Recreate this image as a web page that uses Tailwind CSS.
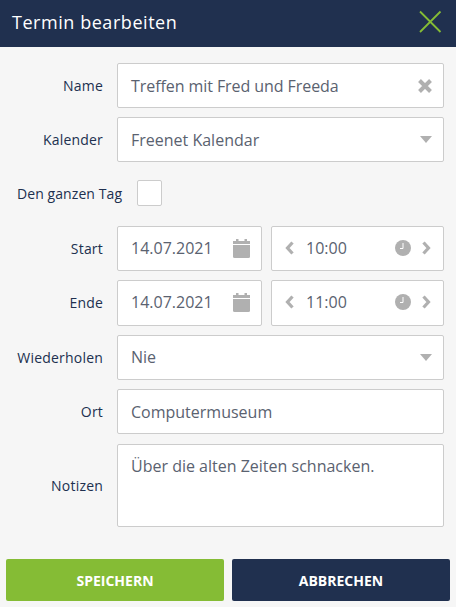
<!DOCTYPE html>
<html lang="de">
<head>
<meta charset="utf-8">
<script src="https://cdn.jsdelivr.net/npm/@tailwindcss/browser@4"></script>
</head>
<body class="m-0 bg-[#f6f6f6] font-['Open_Sans',sans-serif]">
<div class="w-[456px] h-[607px] flex flex-col overflow-hidden">
  <header class="h-[47px] bg-[#20304f] flex items-center justify-between pl-3 pr-[14px] shrink-0">
    <h1 class="text-[18px] text-white font-normal tracking-[0.55px] mb-[2px]">Termin bearbeiten</h1>
    <svg width="24" height="24" viewBox="0 0 24 24" class="mb-[3px]"><path d="M2 1.500 L22.500 22 M22.500 1.500 L2 22" stroke="#85bc35" stroke-width="1.800" fill="none"/></svg>
  </header>
  <main class="flex-1 flex flex-col pt-4 pr-3 pl-0">
    <div class="flex items-center h-[45px]">
      <label class="w-[103px] text-right text-[14px] tracking-[0.2px] text-[#20304f]">Name</label>
      <div class="ml-[14px] flex-1 h-full bg-white border border-[#cccccc] rounded-[2px] flex items-center justify-between pl-[13px] pr-[11px] text-[16px] text-[#5a6270]">
        <span class="tracking-[-0.07px]">Treffen mit Fred und Freeda</span>
        <svg width="14" height="14" viewBox="0 0 14 14"><path d="M1.500 1.500 L12.500 12.500 M12.500 1.500 L1.500 12.500" stroke="#b0b0b0" stroke-width="4" fill="none"/></svg>
      </div>
    </div>
    <div class="flex items-center h-[45px] mt-[9px]">
      <label class="w-[103px] text-right text-[14px] tracking-[0.2px] text-[#20304f]">Kalender</label>
      <div class="ml-[14px] flex-1 h-full bg-white border border-[#cccccc] rounded-[2px] flex items-center justify-between pl-[13px] pr-[11px] text-[16px] text-[#5a6270]">
        <span>Freenet Kalendar</span>
        <svg width="12" height="7" viewBox="0 0 12 7"><path d="M0 0 H12 L6 7 Z" fill="#b0b0b0"/></svg>
      </div>
    </div>
    <div class="flex items-center h-[26px] mt-[18px]">
      <label class="pl-[17px] w-[120px] whitespace-nowrap text-[14px] tracking-[0.08px] text-[#20304f]">Den ganzen Tag</label>
      <div class="ml-[17px] w-[25px] h-[26px] bg-white border border-[#cccccc] rounded-[2px]"></div>
    </div>
    <div class="flex items-center h-[45px] mt-[20px]">
      <label class="w-[103px] text-right text-[14px] tracking-[0.2px] pb-[1px] text-[#20304f]">Start</label>
      <div class="ml-[14px] w-[145px] h-full bg-white border border-[#cccccc] rounded-[2px] flex items-center justify-between pl-[13px] pr-[11px] pb-[1px] text-[16px] text-[#5a6270]">
        <span>14.07.2021</span>
        <svg width="17" height="19" viewBox="0 0 17 19"><path d="M3 0h2.500v3h-2.500zM11.500 0h2.500v3h-2.500z" fill="#b0b0b0"/><path d="M0 2h17v3h-17z" fill="#b0b0b0"/><path d="M0 6h17v11.500a1.500 1.500 0 0 1-1.500 1.500h-14a1.500 1.500 0 0 1-1.500-1.500z" fill="#b0b0b0"/></svg>
      </div>
      <div class="ml-[9px] flex-1 h-full bg-white border border-[#cccccc] rounded-[2px] flex items-center pl-[13px] pr-[12px] pb-[1px] text-[16px] text-[#5a6270]">
        <svg width="9" height="14" viewBox="0 0 9 14"><path d="M7.500 1.500 L2.500 7 L7.500 12.500" stroke="#b0b0b0" stroke-width="3.200" fill="none"/></svg>
        <span class="ml-[12px]">10:00</span>
        <svg class="ml-auto" width="16" height="16" viewBox="0 0 16 16"><circle cx="8" cy="8" r="8" fill="#b0b0b0"/><path d="M8 3 V8.500 H5" stroke="#fff" stroke-width="1" fill="none"/></svg>
        <svg class="ml-[11px]" width="9" height="14" viewBox="0 0 9 14"><path d="M1.500 1.500 L6.500 7 L1.500 12.500" stroke="#b0b0b0" stroke-width="3.200" fill="none"/></svg>
      </div>
    </div>
    <div class="flex items-center h-[46px] mt-[9px]">
      <label class="w-[103px] text-right text-[14px] tracking-[0.2px] pb-[2px] text-[#20304f]">Ende</label>
      <div class="ml-[14px] w-[145px] h-full bg-white border border-[#cccccc] rounded-[2px] flex items-center justify-between pl-[13px] pr-[11px] pb-[2px] text-[16px] text-[#5a6270]">
        <span>14.07.2021</span>
        <svg width="17" height="19" viewBox="0 0 17 19"><path d="M3 0h2.500v3h-2.500zM11.500 0h2.500v3h-2.500z" fill="#b0b0b0"/><path d="M0 2h17v3h-17z" fill="#b0b0b0"/><path d="M0 6h17v11.500a1.500 1.500 0 0 1-1.500 1.500h-14a1.500 1.500 0 0 1-1.500-1.500z" fill="#b0b0b0"/></svg>
      </div>
      <div class="ml-[9px] flex-1 h-full bg-white border border-[#cccccc] rounded-[2px] flex items-center pl-[13px] pr-[12px] pb-[2px] text-[16px] text-[#5a6270]">
        <svg width="9" height="14" viewBox="0 0 9 14"><path d="M7.500 1.500 L2.500 7 L7.500 12.500" stroke="#b0b0b0" stroke-width="3.200" fill="none"/></svg>
        <span class="ml-[12px]">11:00</span>
        <svg class="ml-auto" width="16" height="16" viewBox="0 0 16 16"><circle cx="8" cy="8" r="8" fill="#b0b0b0"/><path d="M8 3 V8.500 H5" stroke="#fff" stroke-width="1" fill="none"/></svg>
        <svg class="ml-[11px]" width="9" height="14" viewBox="0 0 9 14"><path d="M1.500 1.500 L6.500 7 L1.500 12.500" stroke="#b0b0b0" stroke-width="3.200" fill="none"/></svg>
      </div>
    </div>
    <div class="flex items-center h-[45px] mt-[9px]">
      <label class="w-[103px] text-right text-[14px] tracking-[0.2px] pb-[1px] text-[#20304f]">Wiederholen</label>
      <div class="ml-[14px] flex-1 h-full bg-white border border-[#cccccc] rounded-[2px] flex items-center justify-between pl-[13px] pr-[11px] pb-[1px] text-[16px] text-[#5a6270]">
        <span>Nie</span>
        <svg width="12" height="7" viewBox="0 0 12 7"><path d="M0 0 H12 L6 7 Z" fill="#b0b0b0"/></svg>
      </div>
    </div>
    <div class="flex items-center h-[45px] mt-[9px]">
      <label class="w-[103px] text-right text-[14px] tracking-[0.2px] text-[#20304f]">Ort</label>
      <div class="ml-[14px] flex-1 h-full bg-white border border-[#cccccc] rounded-[2px] flex items-center pl-[13px] text-[16px] text-[#5a6270]">
        <span>Computermuseum</span>
      </div>
    </div>
    <div class="flex items-center h-[83px] mt-[10px]">
      <label class="w-[103px] text-right text-[14px] tracking-[0.2px] text-[#20304f]">Notizen</label>
      <div class="ml-[14px] flex-1 h-full bg-white border border-[#cccccc] rounded-[2px] pl-[13px] pt-[8px] text-[16px] leading-[26px] text-[#5a6270]">
        <span>Über die alten Zeiten schnacken.</span>
      </div>
    </div>
  </main>
  <footer class="flex gap-2 px-[6px] pb-[6px] shrink-0">
    <button class="flex-1 h-[42px] bg-[#85bc35] rounded-[2px] text-white text-[14px] font-bold">SPEICHERN</button>
    <button class="flex-1 h-[42px] bg-[#20304f] rounded-[2px] text-white text-[14px] font-bold">ABBRECHEN</button>
  </footer>
</div>
</body>
</html>
